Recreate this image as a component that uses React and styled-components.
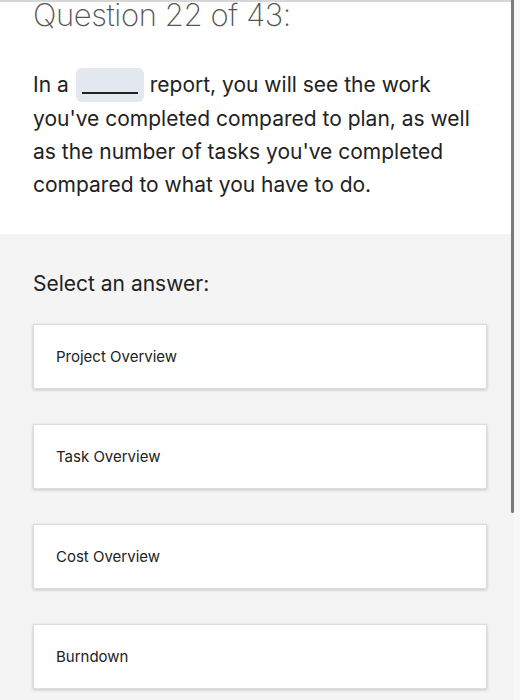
import React from "react";
import styled, { createGlobalStyle } from "styled-components";

const GlobalStyle = createGlobalStyle`
  html, body {
    margin: 0;
    padding: 0;
    background: #f4f4f4;
  }
  body {
    font-family: Inter, "Liberation Sans", Arial, sans-serif;
    color: #222;
  }
`

const Page = styled.div`
  position: relative;
  width: 520px;
  height: 700px;
  overflow: hidden;
  background: #f4f4f4;
`

const QuestionBox = styled.section`
  background: #fff;
  border-top: 2px solid #d6d6d6;
  height: 234px;
  padding: 0 33px;
  box-sizing: border-box;
`

const Title = styled.h1`
  margin: 0;
  margin-top: -5px;
  font-family: Inter, "Liberation Sans", sans-serif;
  font-weight: 200;
  font-size: 31px;
  line-height: 36px;
  color: #555;
  letter-spacing: -0.4px;
`

const Prompt = styled.p`
  margin: 35px 0 0;
  font-size: 21px;
  line-height: 33px;
  color: #222;
  max-width: 452px;
`

const Blank = styled.span`
  display: inline-block;
  width: 68px;
  height: 34px;
  margin: 0 6px 0 7px;
  vertical-align: -10px;
  border-radius: 6px;
  background: #e3e7ef;
  position: relative;

  &::after {
    content: "";
    position: absolute;
    left: 6px;
    right: 6px;
    bottom: 8px;
    height: 2px;
    background: #222;
  }
`

const Answers = styled.section`
  padding: 36px 33px 0;
`

const Label = styled.h2`
  margin: 0 0 26px;
  font-size: 21px;
  font-weight: 400;
  line-height: 28px;
  color: #222;
`

const List = styled.div`
  display: flex;
  flex-direction: column;
  gap: 35px;
  width: 454px;
`

const Option = styled.button`
  display: flex;
  align-items: center;
  height: 65px;
  padding: 0 22px;
  background: #fff;
  border: 1px solid #dcdcdc;
  box-shadow: 0 1px 3px rgba(0, 0, 0, 0.2);
  font-family: Inter, "Liberation Sans", Arial, sans-serif;
  font-size: 15px;
  color: #222;
  text-align: left;
  box-sizing: border-box;
`

const ScrollThumb = styled.div`
  position: absolute;
  top: 0;
  left: 511px;
  width: 3px;
  height: 513px;
  background: #7a7a7a;
  border-radius: 0 0 2px 2px;
`

const ScrollTrack = styled.div`
  position: absolute;
  top: 0;
  right: 0;
  width: 6px;
  height: 700px;
  background: #f8f8f8;
`

const options = ["Project Overview", "Task Overview", "Cost Overview", "Burndown"]

export default function App() {
  return (
    <>
      <GlobalStyle />
      <Page>
        <QuestionBox>
          <Title>Question 22 of 43:</Title>
          <Prompt>
            In a<Blank />report, you will see the work you've completed compared to plan, as well as the number of tasks you've completed compared to what you have to do.
          </Prompt>
        </QuestionBox>
        <Answers>
          <Label>Select an answer:</Label>
          <List>
            {options.map((o) => (
              <Option key={o}>{o}</Option>
            ))}
          </List>
        </Answers>
        <ScrollTrack />
        <ScrollThumb />
      </Page>
    </>
  )
}
